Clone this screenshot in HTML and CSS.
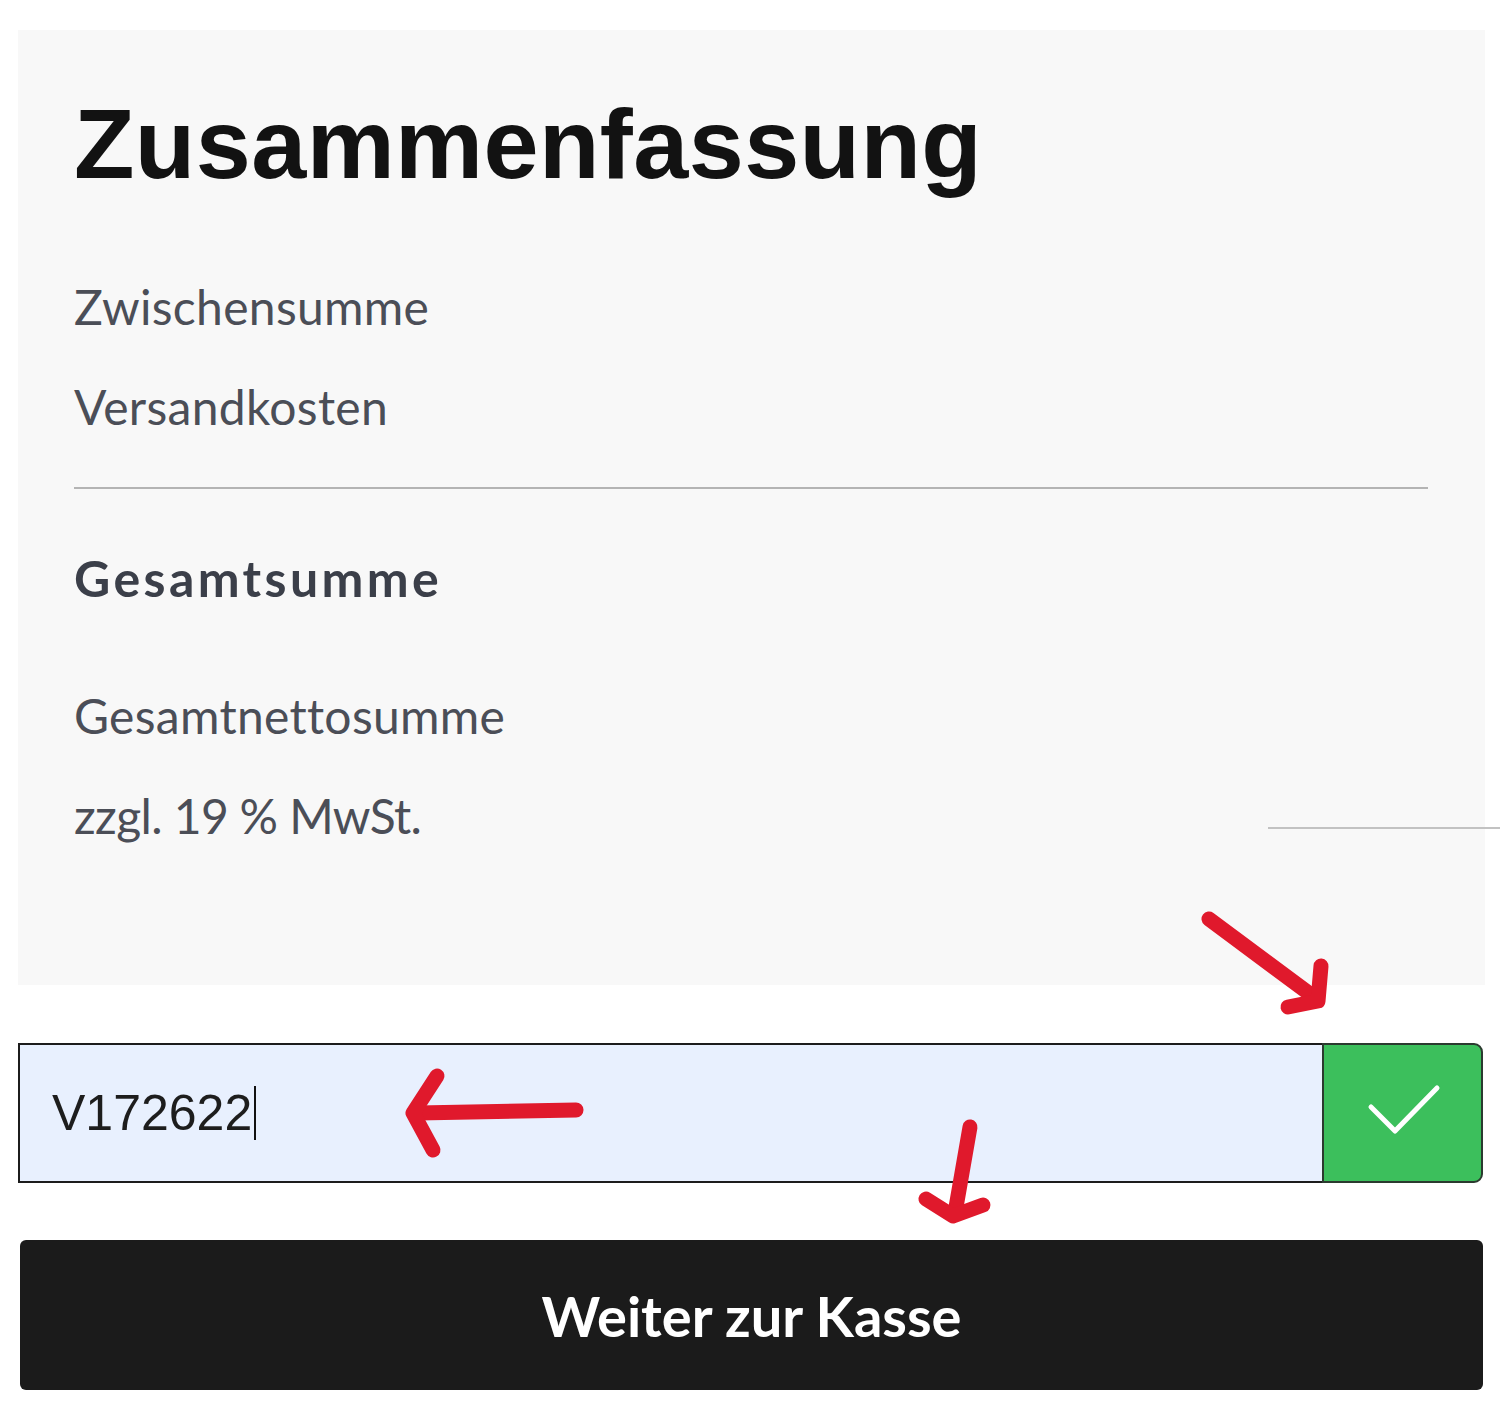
FILE: index.html
```html
<!DOCTYPE html>
<html lang="de">
<head>
  <meta charset="UTF-8" />
  <meta name="viewport" content="width=device-width, initial-scale=1.0" />
  <title>Warenkorb – Zusammenfassung</title>
  <link rel="stylesheet" href="styles.css">
</head>

<body>
  <div class="page">
    <div class="summary">
      <h1>Zusammenfassung</h1>

      <div class="row first">Zwischensumme</div>
      <div class="row">Versandkosten</div>

      <hr class="divider">

      <div class="row total">Gesamtsumme</div>
      <div class="row net">Gesamtnettosumme</div>
      <div class="row tax">zzgl. 19&#8239;% MwSt.</div>

      <span class="stray-line"></span>
    </div>

    <div class="coupon">
      <div class="coupon-field">
        <span class="coupon-value">V172622</span><span class="caret"></span>
      </div>
      <button class="coupon-apply" type="button" aria-label="Gutschein einlösen">
        <svg width="80" height="60" viewBox="0 0 80 60">
          <polyline points="8,24 32,48 74,5" fill="none" stroke="#ffffff" stroke-width="5" stroke-linecap="round" stroke-linejoin="round" />
        </svg>
      </button>
    </div>

    <button class="checkout" type="button">Weiter zur Kasse</button>

    <!-- red hand drawn marks from the screenshot -->
    <svg class="marks" width="1500" height="1423" viewBox="0 0 1500 1423">
      <g fill="none" stroke="#e0192c" stroke-width="15" stroke-linecap="round" stroke-linejoin="round">
        <path d="M1209 919 L1314 997" />
        <path d="M1321 966 L1318 1001 L1288 1007" />
        <path d="M576 1110 L418 1113" />
        <path d="M437 1076 L413 1113 L433 1150" />
        <path d="M970 1127 L955 1213" />
        <path d="M926 1199 L953 1216 L983 1205" />
      </g>
    </svg>
  </div>
</body>
</html>
```

FILE: styles.css
```css
body {
  margin: 0;
  background: #ffffff;
  font-family: 'Lato', 'Open Sans', sans-serif;
}
.page {
  position: relative;
  width: 1500px;
  height: 1423px;
  padding-top: 30px;
  box-sizing: border-box;
}
.summary {
  position: relative;
  margin-left: 18px;
  width: 1467px;
  box-sizing: border-box;
  padding: 65px 57px 119px 56px;
  background: #f8f8f8;
}
.summary h1 {
  margin: 0;
  font-family: 'Liberation Sans', Arial, sans-serif;
  font-weight: 700;
  font-size: 99px;
  line-height: 98px;
  color: #121212;
  letter-spacing: 0.4px;
}
.row {
  height: 100px;
  line-height: 100px;
  font-size: 48px;
  letter-spacing: 0.3px;
  color: #4b4e57;
}
.row.first {
  margin-top: 64px;
}
.divider {
  margin: 30px 0 0 0;
  border: none;
  height: 2px;
  background: #b4b4b4;
}
.row.total {
  margin-top: 39px;
  font-size: 50px;
  font-weight: 700;
  letter-spacing: 3.4px;
  color: #3b3f49;
}
.row.net {
  margin-top: 38px;
}
.row.tax {
  letter-spacing: -0.6px;
}
.stray-line {
  position: absolute;
  right: -15px;
  top: 797px;
  width: 232px;
  height: 2px;
  background: #c2c2c2;
}
.coupon {
  display: flex;
  margin: 58px 0 0 18px;
  width: 1465px;
  height: 140px;
}
.coupon-field {
  flex: 1;
  display: flex;
  align-items: center;
  padding-left: 32px;
  background: #e8f0fe;
  border: 2px solid #1c1c1c;
  border-right: none;
  font-family: 'Liberation Sans', Arial, sans-serif;
  font-size: 50px;
  color: #1d1d1d;
}
.caret {
  display: inline-block;
  width: 2px;
  height: 54px;
  margin-left: 2px;
  background: #111;
}
.coupon-apply {
  width: 161px;
  height: 140px;
  padding: 0;
  background: #3cbf5c;
  border: 2px solid #2b3a2f;
  border-radius: 0 9px 9px 0;
  display: flex;
  align-items: center;
  justify-content: center;
  cursor: pointer;
}
.checkout {
  display: block;
  margin: 57px 0 0 20px;
  width: 1463px;
  height: 150px;
  background: #1b1b1b;
  color: #ffffff;
  border: none;
  border-radius: 6px;
  font-family: 'Lato', sans-serif;
  font-weight: 700;
  font-size: 56px;
  cursor: pointer;
}
.marks {
  position: absolute;
  top: 0;
  left: 0;
  pointer-events: none;
}
```
